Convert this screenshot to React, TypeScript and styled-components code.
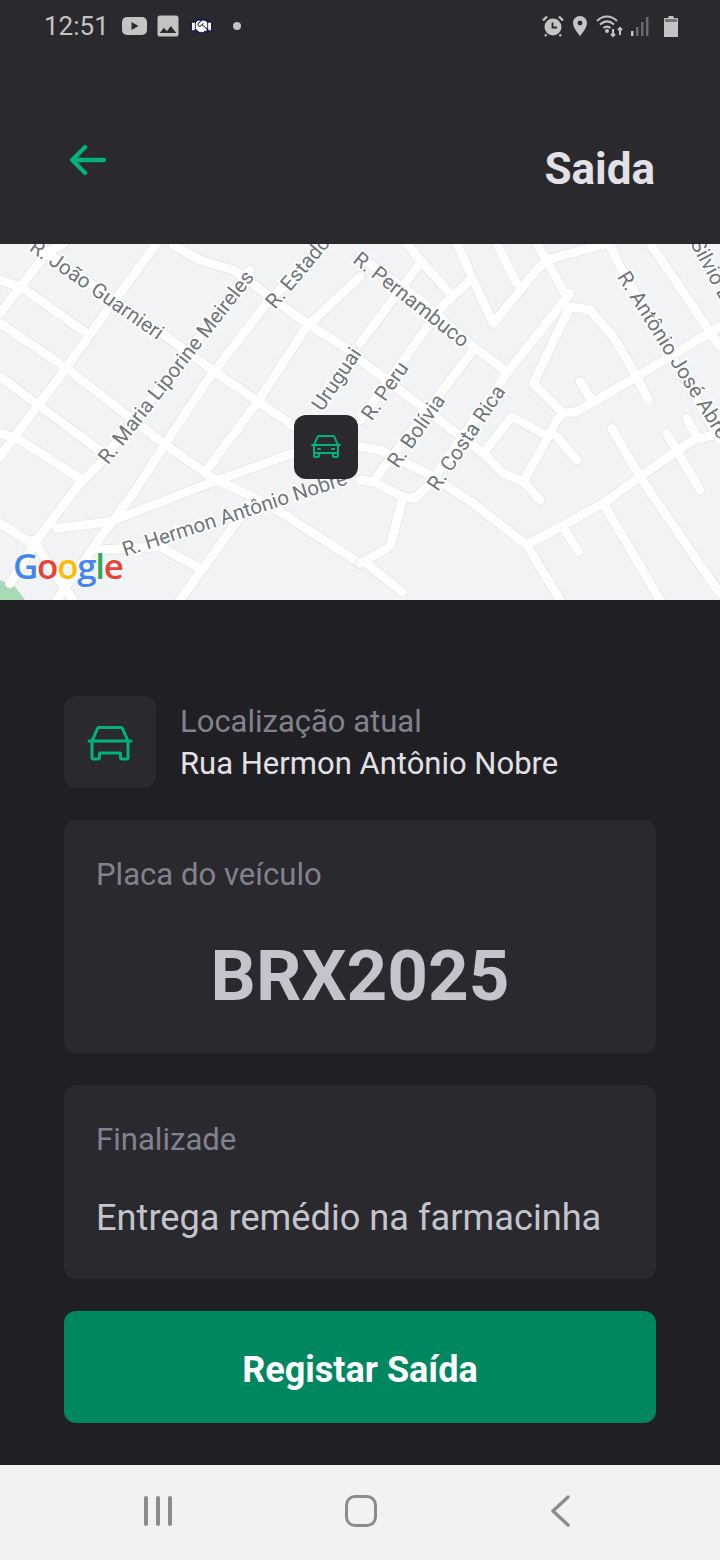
import styled, { createGlobalStyle } from "styled-components";
import { PiArrowLeftBold, PiCar, PiCarSimple } from "react-icons/pi";
import { MdImage, MdLocationOn } from "react-icons/md";
import { FaHandshake } from "react-icons/fa";

const leftRoads = [
  "M100 10L500 290L650 400L885 560",
  "M0 120L70 145L260 280",
  "M0 250L200 385L490 610L640 715L800 790L1080 970",
  "M0 410L115 495L310 640",
  "M0 580L60 600L240 715",
  "M0 850L110 920",
  "M470 10L330 200L190 395L110 500L0 650",
  "M750 90L560 340L300 670L240 730L110 900L30 1030",
  "M980 10L800 190L630 410L490 620L400 760L310 880L170 1080",
  "M1080 110L920 260L770 490L620 690",
  "M0 220L140 40L190 10",
  "M170 865L330 845L640 725L880 640L1080 620",
  "M480 920L590 980",
  "M750 790L540 1080",
  "M290 930L480 920",
  "M520 15L600 60L700 90L920 250L1080 350",
  "M100 900L190 1040L220 1080",
];

const rightRoads = [
  "M0 50L180 180L340 320L440 395",
  "M630 160L440 400L210 730L165 775L130 770L40 725L0 720",
  "M130 770L90 920L0 970",
  "M20 970L125 1055",
  "M0 620L60 630L200 700L340 790L500 915L600 1080",
  "M500 915L730 790L840 710L1000 600L1080 580",
  "M0 360L370 640L430 700L490 725L540 780",
  "M370 640L455 530L565 590L590 540L610 520L650 515L710 480L830 410L1030 290L1080 260",
  "M565 590L495 715",
  "M590 590L650 660",
  "M610 520L520 430L620 220L630 200L690 210L760 290L830 410L865 480",
  "M660 425L695 480",
  "M755 565L840 710L1010 960L1080 1060",
  "M920 580L1020 750",
  "M980 535L1010 590",
  "M730 790L900 1080",
  "M615 870L655 935",
  "M140 10L180 60L270 160",
  "M290 10L340 120L400 250L530 90L560 60L740 10",
  "M410 10L470 130",
  "M530 10L620 170",
  "M750 15L780 80L1080 600",
  "M870 10L1060 290L1080 320",
  "M325 125L250 195L0 540",
  "M180 70L0 310",
  "M340 330L50 710",
];

const streetLabels = [
  { text: "R. João Guarnieri", x: 85, y: 30, angle: 35 },
  { text: "R. Maria Liporine Meireles", x: 324, y: 676, angle: -52 },
  { text: "R. Estado", x: 825, y: 210, angle: -50 },
  { text: "R. Uruguai", x: 928, y: 575, angle: -56 },
  { text: "R. Hermon Antônio Nobre", x: 375, y: 950, angle: -18 },
  { text: "R. Pernambuco", x: 1055, y: 65, angle: 38 },
  { text: "R. Peru", x: 1115, y: 545, angle: -55 },
  { text: "R. Bolívia", x: 1193, y: 688, angle: -55 },
  { text: "R. Costa Rica", x: 1313, y: 757, angle: -56 },
  { text: "R. Antônio José Abreu", x: 1850, y: 110, angle: 58 },
  { text: "Silvio B.", x: 2070, y: 10, angle: 62 },
];

export default function App() {
  return (
    <>
      <GlobalStyle />
      <Screen>
        <TopArea>
          <StatusBar>
            <StatusGroup>
              <Clock>12:51</Clock>
              <svg width="25" height="18" viewBox="0 0 25 18">
                <rect width="25" height="18" rx="5" fill="#c4c4c4" />
                <path d="M9.5 5l7 4-7 4z" fill="#29292e" />
              </svg>
              <ImageIcon />
              <HandshakeBadge>
                <FaHandshake size={19} color="#fff" />
              </HandshakeBadge>
              <StatusDot />
            </StatusGroup>
            <StatusGroup $right>
              <svg width="22" height="22" viewBox="0 0 22 22">
                <circle cx="11" cy="12" r="8.5" fill="#c4c4c4" />
                <path d="M10.5 7.5V12.5H15" fill="none" stroke="#29292e" strokeWidth="1.8" />
                <path d="M1 5.5L5 1.5M21 5.5L17 1.5M4.5 19.5L3 21M17.5 19.5L19 21" stroke="#c4c4c4" strokeWidth="2.4" />
              </svg>
              <PinIcon />
              <svg width="28" height="24" viewBox="0 0 28 24" fill="none" stroke="#c4c4c4" strokeWidth="2">
                <path d="M1 7C7 1 15 1 21 7" />
                <path d="M4 10.5C8.5 6.5 13.5 6.5 18 10.5" />
                <path d="M7.5 14C10 12 12 12 14.5 14" />
                <circle cx="11" cy="17" r="1" fill="#c4c4c4" />
                <path d="M17 15v7M15 20l2 2 2-2M24 21v-7M22 16l2-2 2 2" />
              </svg>
              <svg width="19" height="20" viewBox="0 0 19 20">
                <rect x="0" y="15" width="2.5" height="5" fill="#c4c4c4" />
                <rect x="5" y="11" width="2.5" height="9" fill="#6b6b6e" />
                <rect x="10" y="6" width="2.5" height="14" fill="#6b6b6e" />
                <rect x="15" y="1" width="2.5" height="19" fill="#6b6b6e" />
              </svg>
              <BatteryIcon width="14" height="21" viewBox="0 0 14 21">
                <path d="M4.5 0h5v2H13a1 1 0 0 1 1 1v18H0V3a1 1 0 0 1 1-1h3.5z" fill="#c4c4c4" />
                <rect x="1" y="3" width="12" height="3" fill="#77777a" />
              </BatteryIcon>
            </StatusGroup>
          </StatusBar>
          <Header>
            <BackIcon />
            <Title>Saida</Title>
          </Header>
        </TopArea>

        <MapArea>
          <MapDrawing viewBox="0 12 2160 1068" preserveAspectRatio="none">
            <rect x="0" y="12" width="2160" height="1068" fill="#f1f3f4" />
            <path d="M0 1020L45 1040L75 1080H0Z" fill="#a8dab5" />
            <RoadLayer paths={leftRoads} />
            <g transform="translate(1080 0)">
              <RoadLayer paths={rightRoads} />
            </g>
            {streetLabels.map((label) => (
              <StreetLabel
                key={label.text}
                x={label.x}
                y={label.y}
                transform={`rotate(${label.angle} ${label.x} ${label.y})`}
              >
                {label.text}
              </StreetLabel>
            ))}
          </MapDrawing>
          <GoogleMark>
            <span style={{ color: "#4285f4" }}>G</span>
            <span style={{ color: "#ea4335" }}>o</span>
            <span style={{ color: "#fbbc05" }}>o</span>
            <span style={{ color: "#4285f4" }}>g</span>
            <span style={{ color: "#34a853" }}>l</span>
            <span style={{ color: "#ea4335" }}>e</span>
          </GoogleMark>
          <Marker>
            <PiCar size={32} color="#00b37e" />
          </Marker>
        </MapArea>

        <Body>
          <LocationRow>
            <LocationIcon>
              <PiCarSimple size={48} color="#00b37e" />
            </LocationIcon>
            <LocationText>
              <LocationLabel>Localização atual</LocationLabel>
              <LocationValue>Rua Hermon Antônio Nobre</LocationValue>
            </LocationText>
          </LocationRow>
          <PlateCard>
            <CardLabel>Placa do veículo</CardLabel>
            <PlateValue>BRX2025</PlateValue>
          </PlateCard>
          <PurposeCard>
            <CardLabel>Finalizade</CardLabel>
            <PurposeValue>Entrega remédio na farmacinha</PurposeValue>
          </PurposeCard>
          <SubmitButton>Registar Saída</SubmitButton>
        </Body>

        <NavBar>
          <NavBars>
            <i />
            <i />
            <i />
          </NavBars>
          <NavHome />
          <svg width="20" height="32" viewBox="0 0 20 32" fill="none" stroke="#8c8c8c" strokeWidth="3.4" strokeLinecap="round" strokeLinejoin="round">
            <path d="M18 2L3 16L18 30" />
          </svg>
        </NavBar>
      </Screen>
    </>
  );
}

function RoadLayer({ paths }: { paths: string[] }) {
  return (
    <>
      {paths.map((d) => (
        <RoadCasing key={d} d={d} />
      ))}
      {paths.map((d) => (
        <RoadFill key={d} d={d} />
      ))}
    </>
  );
}

const GlobalStyle = createGlobalStyle`
  html, body {
    margin: 0;
    padding: 0;
    background: #202024;
  }
  * {
    box-sizing: border-box;
  }
`;

const Screen = styled.div`
  width: 720px;
  height: 1560px;
  display: flex;
  flex-direction: column;
  overflow: hidden;
  font-family: Roboto, "Liberation Sans", sans-serif;
`;

const TopArea = styled.div`
  height: 244px;
  background: #29292e;
  display: flex;
  flex-direction: column;
`;

const StatusBar = styled.div`
  height: 52px;
  padding: 0 42px 0 44px;
  display: flex;
  align-items: center;
  justify-content: space-between;
`;

const StatusGroup = styled.div<{ $right?: boolean }>`
  display: flex;
  align-items: center;
  gap: ${(p) => (p.$right ? "7px" : "10px")};
`;

const Clock = styled.span`
  font-size: 26px;
  color: #c4c4c4;
  margin-right: 3px;
`;

const ImageIcon = styled(MdImage)`
  width: 28px;
  height: 28px;
  margin: 0 -3px;
  color: #c4c4c4;
`;

const PinIcon = styled(MdLocationOn)`
  width: 24px;
  height: 24px;
  margin: 0 -3px;
  color: #c4c4c4;
`;

const BatteryIcon = styled.svg`
  margin-left: 7px;
`;

const HandshakeBadge = styled.span`
  width: 23px;
  height: 16px;
  border-radius: 50%;
  background: #1d1f4a;
  display: flex;
  align-items: center;
  justify-content: center;
  margin-left: 1px;
`;

const StatusDot = styled.span`
  width: 8px;
  height: 8px;
  border-radius: 50%;
  background: #c4c4c4;
  margin-left: 10px;
`;

const Header = styled.div`
  flex: 1;
  padding: 41px 65px 0;
  display: flex;
  align-items: center;
  justify-content: space-between;
`;

const BackIcon = styled(PiArrowLeftBold)`
  width: 46px;
  height: 46px;
  color: #00b37e;
  margin: -17px 0 0 0;
`;

const Title = styled.h1`
  margin: 0;
  font-size: 44px;
  font-weight: 700;
  color: #e1e1e6;
`;

const MapArea = styled.div`
  position: relative;
  height: 356px;
  overflow: hidden;
`;

const MapDrawing = styled.svg`
  display: block;
  width: 720px;
  height: 356px;
`;

const RoadCasing = styled.path`
  fill: none;
  stroke: #e2e3e6;
  stroke-width: 31;
  stroke-linecap: round;
  stroke-linejoin: round;
`;

const RoadFill = styled.path`
  fill: none;
  stroke: #ffffff;
  stroke-width: 27;
  stroke-linecap: round;
  stroke-linejoin: round;
`;

const StreetLabel = styled.text`
  font-family: Roboto, sans-serif;
  font-size: 62px;
  fill: #70757a;
  stroke: #ffffff;
  stroke-width: 10;
  paint-order: stroke;
`;

const GoogleMark = styled.div`
  position: absolute;
  left: 13px;
  bottom: 17px;
  font-family: "Open Sans", sans-serif;
  font-size: 35px;
  font-weight: 600;
  letter-spacing: -1.3px;
  line-height: 1;
  text-shadow: 0 0 3px #fff, 0 0 3px #fff;
`;

const Marker = styled.div`
  position: absolute;
  left: 294px;
  top: 171px;
  width: 64px;
  height: 64px;
  border-radius: 12px;
  background: #29292e;
  display: flex;
  align-items: center;
  justify-content: center;
`;

const Body = styled.div`
  flex: 1;
  background: #202024;
  padding: 96px 64px 0;
  display: flex;
  flex-direction: column;
  gap: 32px;
`;

const LocationRow = styled.div`
  display: flex;
  align-items: center;
  gap: 24px;
`;

const LocationIcon = styled.div`
  width: 92px;
  height: 92px;
  border-radius: 12px;
  background: #29292e;
  padding-top: 3px;
  display: flex;
  align-items: center;
  justify-content: center;
`;

const LocationText = styled.div`
  display: flex;
  flex-direction: column;
  gap: 6px;
  padding-top: 2px;
`;

const LocationLabel = styled.span`
  font-size: 31px;
  line-height: 36px;
  color: #82828e;
`;

const LocationValue = styled.span`
  font-size: 31px;
  line-height: 36px;
  color: #e1e1e6;
`;

const Card = styled.div`
  background: #29292e;
  border-radius: 12px;
  padding: 33px 32px 32px;
`;

const PlateCard = styled(Card)`
  height: 233px;
`;

const PurposeCard = styled(Card)`
  height: 194px;
`;

const CardLabel = styled.div`
  font-size: 31.1px;
  line-height: 44px;
  color: #82828e;
`;

const PlateValue = styled.div`
  margin-top: 37px;
  text-align: center;
  font-size: 71px;
  font-weight: 700;
  line-height: 84px;
  color: #c4c4cc;
`;

const PurposeValue = styled.div`
  margin-top: 30px;
  font-size: 36.2px;
  line-height: 52px;
  color: #c4c4cc;
`;

const SubmitButton = styled.button`
  height: 112px;
  border: none;
  border-radius: 12px;
  background: #00875f;
  color: #ffffff;
  padding: 5px 0 0;
  font-family: inherit;
  font-size: 36px;
  font-weight: 700;
`;

const NavBar = styled.div`
  height: 95px;
  background: #f2f2f2;
  padding: 0 150px 3px 144px;
  display: flex;
  align-items: center;
  justify-content: space-between;
`;

const NavBars = styled.div`
  width: 28px;
  display: flex;
  justify-content: space-between;

  i {
    width: 4px;
    height: 30px;
    border-radius: 2px;
    background: #8c8c8c;
  }
`;

const NavHome = styled.div`
  width: 32px;
  height: 32px;
  border: 3.5px solid #8c8c8c;
  border-radius: 10px;
`;
